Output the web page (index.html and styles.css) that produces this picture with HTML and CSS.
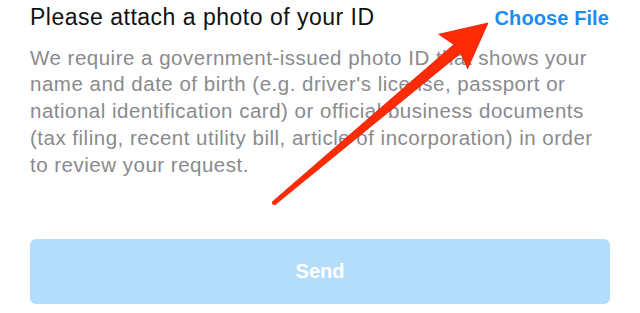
FILE: index.html
```html
<!DOCTYPE html>
<html lang="en">
<head>
    <meta charset="UTF-8">
    <meta name="viewport" content="width=device-width, initial-scale=1.0">
    <title>Verify your ID</title>
    <link rel="stylesheet" href="styles.css">
</head>
<body>
    <div class="page">
        <div class="attach-row">
            <span class="attach-label">Please attach a photo of your ID</span>
            <a class="choose-file" href="#">Choose File</a>
        </div>
        <p class="attach-info">We require a government-issued photo ID that shows your name and date of birth (e.g. driver's license, passport or national identification card) or official business documents (tax filing, recent utility bill, article of incorporation) in order to review your request.</p>
        <button type="button" class="send-button" disabled>Send</button>
    </div>

    <!-- annotation arrow drawn over the page -->
    <svg class="arrow" width="640" height="313" viewBox="0 0 640 313">
        <polygon points="272.7,201.5 275.3,204.5 460.9,52.9 467.6,68.7 488,23 438.7,34.3 453.9,44.5" fill="#ff2a06" stroke="#e02000" stroke-width="0.8" stroke-linejoin="round"/>
        <circle cx="274" cy="203" r="2.1" fill="#ff2a06"/>
    </svg>
</body>
</html>
```

FILE: styles.css
```css
body {
    font-family: "Liberation Sans", Arial, sans-serif;
    background-color: #ffffff;
    margin: 0;
    padding: 0;
}

.page {
    padding: 0 30px;
    width: 580px;
}

.attach-row {
    display: flex;
    justify-content: space-between;
    align-items: baseline;
    height: 34px;
}

.attach-label {
    font-size: 23px;
    line-height: 34px;
    letter-spacing: 0.5px;
    color: #111111;
}

.choose-file {
    font-size: 20px;
    font-weight: bold;
    letter-spacing: 0.1px;
    color: #1a8cf2;
    text-decoration: none;
    margin-right: 1px;
}

.attach-info {
    margin: 10.5px 0 0;
    font-size: 20.5px;
    line-height: 26.8px;
    letter-spacing: 0.5px;
    color: #8a8a8e;
}

.send-button {
    display: block;
    width: 580px;
    height: 65px;
    margin-top: 60.5px;
    border: none;
    border-radius: 6px;
    background-color: #b3ddfb;
    color: #ffffff;
    font-family: "Liberation Sans", Arial, sans-serif;
    font-size: 20px;
    font-weight: bold;
}

.arrow {
    position: absolute;
    top: 0;
    left: 0;
    pointer-events: none;
}
```
